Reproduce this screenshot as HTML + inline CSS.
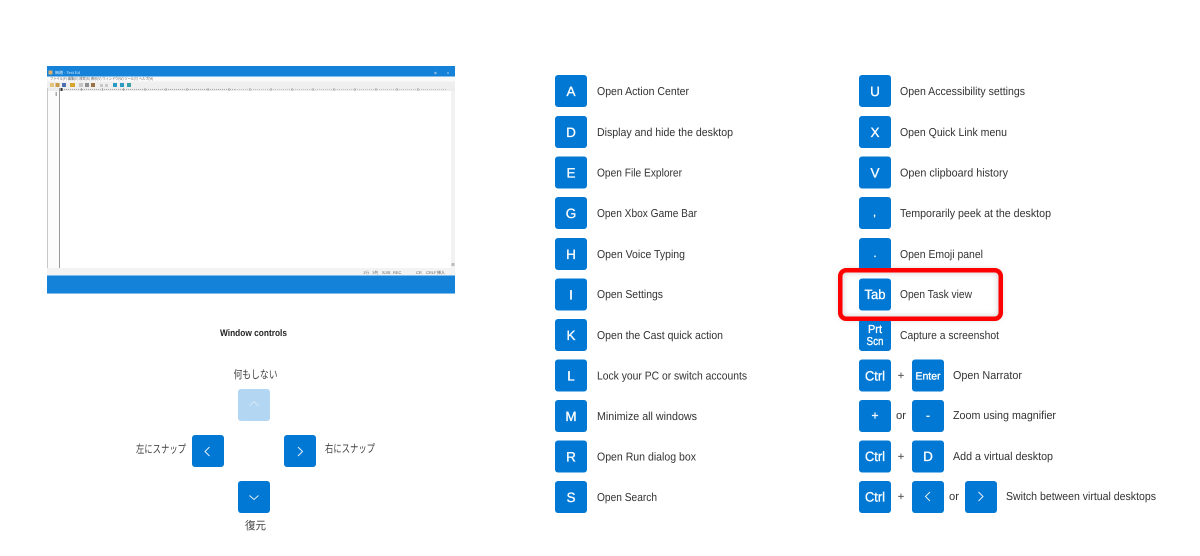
<!DOCTYPE html>
<html lang="en">
<head>
<meta charset="utf-8">
<title>Windows key shortcuts</title>
<style>
html,body{margin:0;padding:0;background:#fff;width:1200px;height:556px;overflow:hidden}
svg{display:block}
text{font-family:"Liberation Sans","Noto Sans CJK JP",sans-serif;text-rendering:geometricPrecision}
.d{font-size:11.5px;fill:#333}
.j{font-size:11.5px;fill:#444}
.k{font-size:13.5px;fill:#fff;stroke:#fff;stroke-width:.3px;text-anchor:middle}
.m{font-size:4px;fill:#666}
.c{fill:none;stroke:#e6f1fa;stroke-width:1}
.p{font-size:11px;fill:#555;stroke:#555;stroke-width:.2px;text-anchor:middle}
</style>
</head>
<body>
<svg width="1200" height="556" viewBox="0 0 1200 556" xmlns="http://www.w3.org/2000/svg">
<defs>
<filter id="sh" x="-20%" y="-30%" width="140%" height="160%"><feGaussianBlur stdDeviation="3"/></filter>
</defs>
<rect width="1200" height="556" fill="#fff"/>

<!-- Screenshot panel -->
<rect x="47" y="66" width="408" height="228" fill="#f3f3f3"/>
<rect x="47" y="66" width="408" height="10.500" fill="#1482d8"/>
<rect x="48.500" y="70.500" width="4" height="4" fill="#d9b070"/>
<text x="55" y="74" class="m" style="fill:#dcebf8">無題 - Text Ed</text>
<circle cx="435.500" cy="73" r="1.300" fill="#7fb8e6"/>
<rect x="447" y="72" width="2" height="2" fill="#5fa8e2"/>
<rect x="47" y="76.500" width="408" height="5" fill="#fafafa"/>
<text x="50" y="80" class="m" textLength="103" lengthAdjust="spacingAndGlyphs">ファイル(F) 編集(E) 検索(S) 表示(V) ウィンドウ(W) ツール(T) ヘルプ(H)</text>
<rect x="47" y="81.500" width="408" height="6.500" fill="#efefef"/>
<rect x="50" y="83" width="4" height="4" fill="#e4c47c"/>
<rect x="55.500" y="83" width="4" height="4" fill="#c79a45"/>
<rect x="62" y="83" width="4" height="4" fill="#4c70b0"/>
<rect x="70" y="83" width="5" height="4" fill="#d8a52c"/>
<rect x="79" y="83" width="4" height="4" fill="#c6c6c6"/>
<rect x="85" y="83" width="4" height="4" fill="#8f8f8f"/>
<rect x="91" y="83" width="4" height="4" fill="#9a7446"/>
<rect x="100" y="84" width="3" height="3" fill="#c9c9c9"/>
<rect x="105" y="84" width="3" height="3" fill="#c9c9c9"/>
<rect x="113" y="83" width="4" height="4" fill="#2b9bc4"/>
<rect x="120" y="83" width="4" height="4" fill="#2b9bc4"/>
<rect x="127" y="83" width="4" height="4" fill="#3aa0a8"/>
<rect x="47" y="88" width="408" height="187.500" fill="#fff"/>
<rect x="47" y="88" width="408" height="3" fill="#ececec"/>
<path d="M62 89.500H235" stroke="#aaa" stroke-width="1" stroke-dasharray="1 1"/>
<path d="M235 89.500H447" stroke="#c4c4c4" stroke-width="1" stroke-dasharray="1 1"/>
<rect x="60.500" y="88" width="2" height="3" fill="#333"/>
<path d="M81.500 88v3M102.500 88v3M123.500 88v3M145 88v3M166 88v3M187 88v3M208 88v3M229 88v3M250 88v3M271 88v3M292 88v3M313 88v3M334 88v3M355 88v3M376 88v3M397 88v3M418 88v3" stroke="#aaa" stroke-width="1"/>
<rect x="47.500" y="91" width="12" height="177" fill="#fcfcfc"/>
<path d="M59.500 88V268" stroke="#999" stroke-width="1"/>
<path d="M47.500 88V275" stroke="#c8c8c8" stroke-width="1"/>
<rect x="55.500" y="92" width="1.500" height="4" fill="#aaa"/>
<rect x="451" y="91" width="4" height="177" fill="#f2f2f2"/>
<rect x="451.500" y="263" width="3" height="3" fill="#bbb"/>
<rect x="47" y="268" width="408" height="7.500" fill="#f3f3f3"/>
<text x="363" y="274" class="m">1行</text>
<text x="372" y="274" class="m">1列</text>
<text x="382" y="274" class="m">SJIS</text>
<text x="393" y="274" class="m">REC</text>
<text x="416" y="274" class="m">CR</text>
<text x="426" y="274" class="m">CRLF</text>
<text x="437" y="274" class="m">挿入</text>
<rect x="47" y="275.500" width="408" height="18" fill="#1482d8"/>

<!-- Window controls -->
<text x="220" y="336" textLength="67" lengthAdjust="spacingAndGlyphs" font-size="9.500" font-weight="bold" fill="#222">Window controls</text>
<text x="233.500" y="378.500" class="j" textLength="44" lengthAdjust="spacingAndGlyphs">何もしない</text>
<text x="136" y="453" class="j" textLength="50" lengthAdjust="spacingAndGlyphs">左にスナップ</text>
<text x="325" y="452.500" class="j" textLength="50" lengthAdjust="spacingAndGlyphs">右にスナップ</text>
<text x="245" y="529.500" class="j" textLength="21" lengthAdjust="spacingAndGlyphs">復元</text>

<rect x="238" y="389" width="32" height="32" rx="3" fill="#b3d6f2"/>
<path d="M249.500 406l4.500-4.500 4.500 4.500" fill="none" stroke="#d4e7f7" stroke-width="1"/>
<rect x="192" y="435" width="32" height="32" rx="3" fill="#0078d4"/>
<path class="c" d="M209.500 447l-4.500 4.500 4.500 4.500"/>
<rect x="284" y="435" width="32" height="32" rx="3" fill="#0078d4"/>
<path class="c" d="M298 447l4.500 4.500-4.500 4.500"/>
<rect x="238" y="481" width="32" height="32" rx="3" fill="#0078d4"/>
<path class="c" d="M249.500 495.500l4.500 4 4.500-4"/>

<!-- Left key column -->
<g fill="#0078d4">
<rect x="555" y="75" width="32" height="32" rx="3"/>
<rect x="555" y="116" width="32" height="32" rx="3"/>
<rect x="555" y="156.500" width="32" height="32" rx="3"/>
<rect x="555" y="197" width="32" height="32" rx="3"/>
<rect x="555" y="238" width="32" height="32" rx="3"/>
<rect x="555" y="278.500" width="32" height="32" rx="3"/>
<rect x="555" y="319" width="32" height="32" rx="3"/>
<rect x="555" y="359.500" width="32" height="32" rx="3"/>
<rect x="555" y="400" width="32" height="32" rx="3"/>
<rect x="555" y="440.500" width="32" height="32" rx="3"/>
<rect x="555" y="481" width="32" height="32" rx="3"/>
</g>
<text class="k" x="571" y="96">A</text>
<text class="k" x="571" y="137">D</text>
<text class="k" x="571" y="177.500">E</text>
<text class="k" x="571" y="218">G</text>
<text class="k" x="571" y="259">H</text>
<text class="k" x="571" y="299.500">I</text>
<text class="k" x="571" y="340">K</text>
<text class="k" x="571" y="380.500">L</text>
<text class="k" x="571" y="421">M</text>
<text class="k" x="571" y="461.500">R</text>
<text class="k" x="571" y="502">S</text>

<text class="d" x="597" y="95" textLength="92" lengthAdjust="spacingAndGlyphs">Open Action Center</text>
<text class="d" x="597" y="136" textLength="136" lengthAdjust="spacingAndGlyphs">Display and hide the desktop</text>
<text class="d" x="597" y="176.500" textLength="85" lengthAdjust="spacingAndGlyphs">Open File Explorer</text>
<text class="d" x="597" y="217" textLength="100" lengthAdjust="spacingAndGlyphs">Open Xbox Game Bar</text>
<text class="d" x="597" y="258" textLength="88" lengthAdjust="spacingAndGlyphs">Open Voice Typing</text>
<text class="d" x="597" y="298" textLength="66" lengthAdjust="spacingAndGlyphs">Open Settings</text>
<text class="d" x="597" y="339" textLength="126" lengthAdjust="spacingAndGlyphs">Open the Cast quick action</text>
<text class="d" x="597" y="379.500" textLength="150" lengthAdjust="spacingAndGlyphs">Lock your PC or switch accounts</text>
<text class="d" x="597" y="420" textLength="100" lengthAdjust="spacingAndGlyphs">Minimize all windows</text>
<text class="d" x="597" y="460.500" textLength="99" lengthAdjust="spacingAndGlyphs">Open Run dialog box</text>
<text class="d" x="597" y="501" textLength="60" lengthAdjust="spacingAndGlyphs">Open Search</text>

<!-- Highlight shadow -->
<rect x="841" y="271" width="159" height="47" rx="6" fill="#fff"/>
<rect x="841" y="271" width="159" height="47" rx="6" fill="none" stroke="#bdbdbd" stroke-width="3" filter="url(#sh)"/>

<!-- Right key column -->
<g fill="#0078d4">
<rect x="859" y="75" width="32" height="32" rx="3"/>
<rect x="859" y="116" width="32" height="32" rx="3"/>
<rect x="859" y="156.500" width="32" height="32" rx="3"/>
<rect x="859" y="197" width="32" height="32" rx="3"/>
<rect x="859" y="238" width="32" height="32" rx="3"/>
<rect x="859" y="278.500" width="32" height="32" rx="3"/>
<rect x="859" y="319" width="32" height="32" rx="3"/>
<rect x="859" y="359.500" width="32" height="32" rx="3"/>
<rect x="912" y="359.500" width="32" height="32" rx="3"/>
<rect x="859" y="400" width="32" height="32" rx="3"/>
<rect x="912" y="400" width="32" height="32" rx="3"/>
<rect x="859" y="440.500" width="32" height="32" rx="3"/>
<rect x="912" y="440.500" width="32" height="32" rx="3"/>
<rect x="859" y="481" width="32" height="32" rx="3"/>
<rect x="912" y="481" width="32" height="32" rx="3"/>
<rect x="965" y="481" width="32" height="32" rx="3"/>
</g>
<text class="k" x="875" y="96">U</text>
<text class="k" x="875" y="137">X</text>
<text class="k" x="875" y="177.500">V</text>
<text class="k" x="874.500" y="216" style="font-size:11px">,</text>
<text class="k" x="875" y="257" style="font-size:11px">.</text>
<text class="k" x="875" y="299" textLength="21" lengthAdjust="spacingAndGlyphs">Tab</text>
<text class="k" x="875" y="333" style="font-size:11.5px" textLength="14" lengthAdjust="spacingAndGlyphs">Prt</text>
<text class="k" x="875" y="345" style="font-size:11.5px" textLength="17" lengthAdjust="spacingAndGlyphs">Scn</text>
<text class="k" x="875" y="380.500" textLength="20" lengthAdjust="spacingAndGlyphs">Ctrl</text>
<text class="k" x="928" y="379.500" style="font-size:10.5px" textLength="25" lengthAdjust="spacingAndGlyphs">Enter</text>
<text class="k" x="875" y="419.500" style="font-size:12px">+</text>
<text class="k" x="928" y="419.500" style="font-size:12px">-</text>
<text class="k" x="875" y="461" textLength="20" lengthAdjust="spacingAndGlyphs">Ctrl</text>
<text class="k" x="928" y="461">D</text>
<text class="k" x="875" y="501.500" textLength="20" lengthAdjust="spacingAndGlyphs">Ctrl</text>
<path class="c" d="M930 492l-4.500 4.500 4.500 4.500"/>
<path class="c" d="M978.500 492l4.500 4.500-4.500 4.500"/>

<text class="p" x="901" y="379">+</text>
<text class="p" x="901" y="460">+</text>
<text class="p" x="901" y="500">+</text>
<text class="d" x="896" y="419" textLength="10" lengthAdjust="spacingAndGlyphs">or</text>
<text class="d" x="949" y="500" textLength="10" lengthAdjust="spacingAndGlyphs">or</text>

<text class="d" x="900" y="95" textLength="125" lengthAdjust="spacingAndGlyphs">Open Accessibility settings</text>
<text class="d" x="900" y="136" textLength="107" lengthAdjust="spacingAndGlyphs">Open Quick Link menu</text>
<text class="d" x="900" y="176.500" textLength="108" lengthAdjust="spacingAndGlyphs">Open clipboard history</text>
<text class="d" x="900" y="217" textLength="151" lengthAdjust="spacingAndGlyphs">Temporarily peek at the desktop</text>
<text class="d" x="900" y="258" textLength="83" lengthAdjust="spacingAndGlyphs">Open Emoji panel</text>
<text class="d" x="900" y="298" textLength="72" lengthAdjust="spacingAndGlyphs">Open Task view</text>
<text class="d" x="900" y="339" textLength="99" lengthAdjust="spacingAndGlyphs">Capture a screenshot</text>
<text class="d" x="953" y="379" textLength="69" lengthAdjust="spacingAndGlyphs">Open Narrator</text>
<text class="d" x="953" y="419" textLength="103" lengthAdjust="spacingAndGlyphs">Zoom using magnifier</text>
<text class="d" x="953" y="460" textLength="100" lengthAdjust="spacingAndGlyphs">Add a virtual desktop</text>
<text class="d" x="1006" y="500" textLength="150" lengthAdjust="spacingAndGlyphs">Switch between virtual desktops</text>

<!-- Red highlight -->
<rect x="840.250" y="270.250" width="160.500" height="48.500" rx="6" fill="none" stroke="#fe0000" stroke-width="4.500"/>
</svg>
</body>
</html>
